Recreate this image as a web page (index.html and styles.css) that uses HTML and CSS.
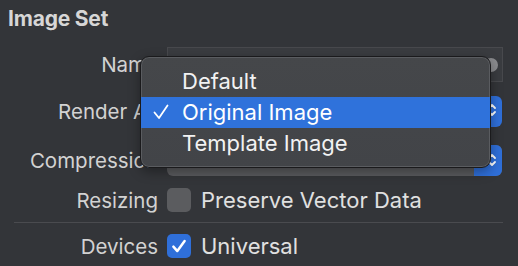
FILE: index.html
```html
<!DOCTYPE html>
<html lang="en">
<head>
    <meta charset="UTF-8">
    <title>Image Set</title>
    <link rel="stylesheet" href="styles.css">
</head>
<body>
    <div class="panel">
        <h1>Image Set</h1>

        <div class="row row-name">
            <span class="label">Name</span>
            <div class="field">
                <span class="clear"></span>
            </div>
        </div>

        <div class="row row-render">
            <span class="label">Render As</span>
            <div class="popup popup-blue">
                <span class="chevrons">
                    <svg width="10" height="18" viewBox="0 0 10 18"><path d="M2 7 L5 4 L8 7 M2 11 L5 14 L8 11" fill="none" stroke="#fff" stroke-width="1.8" stroke-linecap="round" stroke-linejoin="round"/></svg>
                </span>
            </div>
        </div>

        <div class="row row-comp">
            <span class="label">Compression</span>
            <div class="popup popup-gray">
                <span class="arrow">
                    <svg width="10" height="18" viewBox="0 0 10 18"><path d="M2 7 L5 4 L8 7 M2 11 L5 14 L8 11" fill="none" stroke="#fff" stroke-width="1.8" stroke-linecap="round" stroke-linejoin="round"/></svg>
                </span>
            </div>
        </div>

        <div class="row row-check">
            <span class="label">Resizing</span>
            <div class="check-wrap">
                <span class="box"></span>
                <span class="value">Preserve Vector Data</span>
            </div>
        </div>

        <div class="sep"></div>

        <div class="row row-check">
            <span class="label">Devices</span>
            <div class="check-wrap">
                <span class="box box-on">
                    <svg width="18" height="18" viewBox="0 0 16 16"><path d="M3 8.5 L6.5 12.5 L13 3.5" fill="none" stroke="#fff" stroke-width="2.2" stroke-linecap="round" stroke-linejoin="round"/></svg>
                </span>
                <span class="value">Universal</span>
            </div>
        </div>

        <!-- menu aberto sobre o popup Render As -->
        <div class="menu">
            <div class="item">Default</div>
            <div class="item selected">
                <svg class="tick" width="16" height="16" viewBox="0 0 16 16"><path d="M1.5 8.5 L6 14 L14.5 1.5" fill="none" stroke="#fff" stroke-width="1.8" stroke-linecap="round" stroke-linejoin="round"/></svg>
                Original Image
            </div>
            <div class="item">Template Image</div>
        </div>
    </div>
</body>
</html>
```

FILE: styles.css
```css
* {
    margin: 0;
    padding: 0;
    box-sizing: border-box;
}

body {
    background: #333539;
    width: 518px;
    height: 266px;
    overflow: hidden;
    font-family: 'Inter', 'Liberation Sans', sans-serif;
    color: #dcdcdc;
}

.panel {
    position: relative;
    height: 266px;
    padding: 6px 15px 0 8px;
}

h1 {
    font-size: 21px;
    font-weight: 700;
    color: #d6d6d6;
    height: 26px;
    line-height: 26px;
    letter-spacing: -0.2px;
}

.row {
    display: flex;
    align-items: center;
}

.label {
    width: 150px;
    text-align: right;
    font-size: 20.5px;
    color: #d2d2d2;
    margin-right: 9px;
    white-space: nowrap;
}

.row-name {
    margin-top: 15px;
    height: 35px;
}

.field {
    flex: 1;
    height: 35px;
    background: #3a3c40;
    border: 1px solid #48494d;
    position: relative;
}

.clear {
    position: absolute;
    right: 4px;
    top: 10px;
    width: 14px;
    height: 14px;
    border-radius: 50%;
    background: #8a8b8e;
}

.row-render {
    margin-top: 14px;
    height: 31px;
}

.popup {
    flex: 1;
    height: 31px;
    border-radius: 6px;
    display: flex;
    justify-content: flex-end;
    align-items: center;
    margin-right: 1px;
}

.popup-blue {
    background: #2f6fd9;
    padding-right: 5px;
}

.popup-gray {
    background: #5a5b5e;
    overflow: hidden;
}

.arrow {
    width: 28px;
    height: 100%;
    background: #2f6fd9;
    display: flex;
    align-items: center;
    justify-content: flex-end;
    padding-right: 5px;
}

.row-comp {
    margin-top: 17px;
    height: 32px;
}

.row-check {
    height: 24px;
}

.row-comp + .row-check {
    margin-top: 12px;
}

.check-wrap {
    display: flex;
    align-items: center;
}

.box {
    width: 24px;
    height: 24px;
    border-radius: 5px;
    background: #5b5c5f;
    margin-right: 10px;
    display: flex;
    align-items: center;
    justify-content: center;
}

.box-on {
    background: #2f6fd9;
}

.value {
    font-size: 22px;
    color: #e0e0e0;
}

.sep {
    height: 1px;
    background: #4a4b4f;
    margin: 10px 0 11px 6px;
}

.menu {
    position: absolute;
    left: 140px;
    top: 56px;
    width: 351px;
    height: 112px;
    border-radius: 9px;
    background: linear-gradient(180deg, #45474a, #424448);
    border: 1px solid #1a1a1c;
    box-shadow: inset 0 0 0 1px #5a5c60, 0 4px 12px rgba(0, 0, 0, 0.35);
    padding-top: 9px;
    overflow: hidden;
}

.item {
    height: 31px;
    line-height: 31px;
    padding-left: 41px;
    font-size: 22px;
    color: #f2f2f2;
    position: relative;
}

.item.selected {
    background: #2f72db;
    color: #fff;
}

.tick {
    position: absolute;
    left: 12px;
    top: 7px;
}
```
